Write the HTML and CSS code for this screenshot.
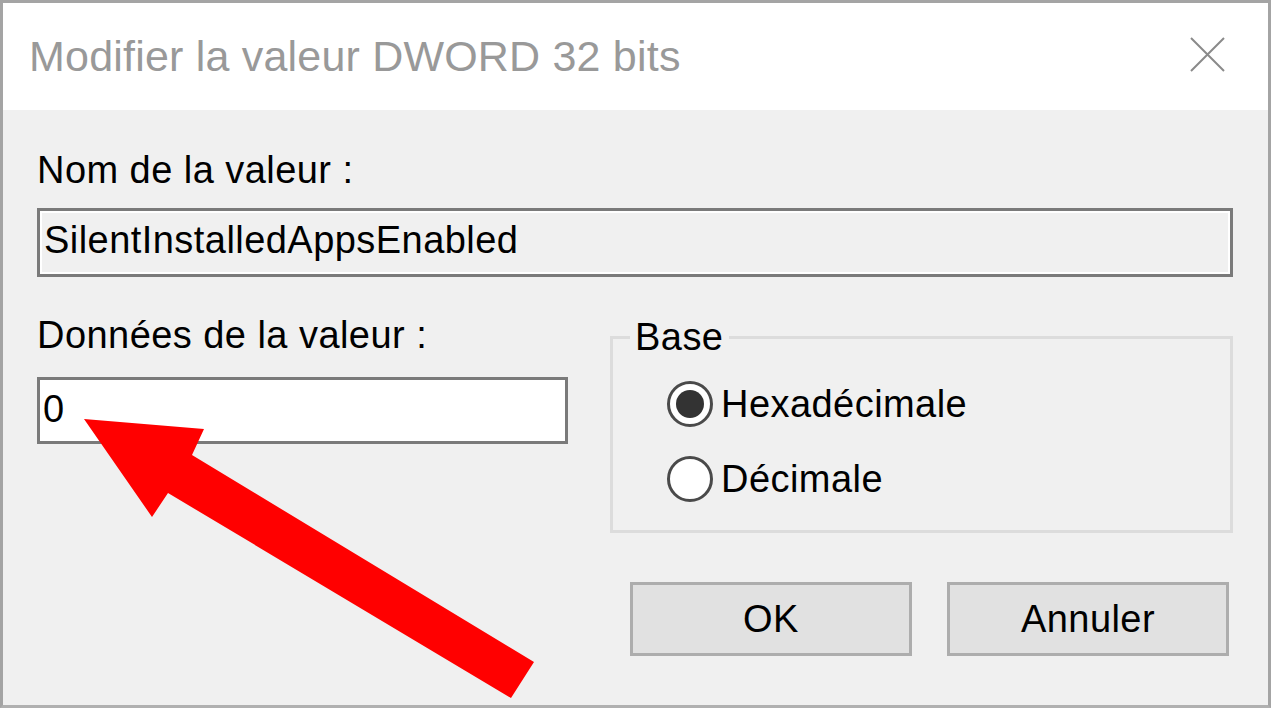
FILE: index.html
```html
<!DOCTYPE html>
<html lang="fr">
<head>
<meta charset="utf-8">
<title>Modifier la valeur DWORD 32 bits</title>
<link rel="stylesheet" href="styles.css">
</head>
<body>
<div class="window">
  <div class="titlebar">
    <span class="title">Modifier la valeur DWORD 32 bits</span>
    <svg class="close" width="35" height="35" viewBox="0 0 35 35">
      <path d="M1 1 L34 34 M34 1 L1 34" stroke="#8a8a8a" stroke-width="2" fill="none"/>
    </svg>
  </div>
  <div class="content">
    <div class="label">Nom de la valeur :</div>
    <div class="field readonly">SilentInstalledAppsEnabled</div>
    <div class="row">
      <div class="col-left">
        <div class="label">Données de la valeur :</div>
        <div class="field data">0</div>
      </div>
      <fieldset class="group">
        <legend class="group-title">Base</legend>
        <div class="group-body">
          <div class="radio-row"><span class="radio checked"></span><span class="radio-label">Hexadécimale</span></div>
          <div class="radio-row"><span class="radio"></span><span class="radio-label">Décimale</span></div>
        </div>
      </fieldset>
    </div>
    <div class="buttons">
      <div class="btn">OK</div>
      <div class="btn">Annuler</div>
    </div>
  </div>
</div>
<svg class="arrow" width="1271" height="708" viewBox="0 0 1271 708">
  <polygon points="84,419 204,429 192,455 534,662 511,698 168,493 152,517" fill="#ff0000"/>
</svg>
</body>
</html>
```

FILE: styles.css
```css
html, body {
  margin: 0;
  padding: 0;
}

body {
  width: 1271px;
  height: 708px;
  overflow: hidden;
  font-family: "Liberation Sans", Arial, sans-serif;
  background: #a8a8a8;
}

.window {
  box-sizing: border-box;
  width: 1271px;
  height: 708px;
  border: 3px solid #a4a4a4;
  border-bottom: 3px solid #b0b0b0;
  display: flex;
  flex-direction: column;
}

.titlebar {
  height: 107px;
  flex: none;
  background: #ffffff;
  display: flex;
  align-items: center;
  justify-content: space-between;
  padding-left: 26px;
}

.title {
  font-size: 43px;
  line-height: 43px;
  letter-spacing: 0.2px;
  color: #999999;
  white-space: nowrap;
}

.close {
  align-self: flex-start;
  margin-top: 34px;
  margin-right: 43px;
}

.content {
  flex: 1;
  background: #f0f0f0;
  padding: 38px 35px 0 34px;
  font-size: 38px;
  line-height: 44px;
  letter-spacing: 0.45px;
  color: #000000;
}

.label {
  height: 44px;
  white-space: nowrap;
}

.field {
  box-sizing: border-box;
  display: flex;
  align-items: center;
  border: 3px solid #7a7a7a;
  white-space: nowrap;
}

.readonly {
  margin-top: 16px;
  height: 69px;
  background: #f0f0f0;
  box-shadow: inset 0 0 0 2px #ffffff;
  padding: 0 4px 6px 4px;
}

.row {
  margin-top: 36px;
  display: flex;
  align-items: flex-start;
  gap: 42px;
}

.col-left {
  width: 531px;
  flex: none;
}

.data {
  margin-top: 20px;
  height: 67px;
  background: #ffffff;
  padding: 0 3px 4px 3px;
}

.group {
  box-sizing: border-box;
  width: 623px;
  flex: none;
  margin: 2px 0 0 0;
  padding: 0;
  min-width: 0;
  border: 3px solid #dcdcdc;
}

.group-title {
  margin-left: 17px;
  padding: 0 6px 0 5px;
  line-height: 44px;
}

.group-body {
  padding: 22px 0 28px 54px;
  display: flex;
  flex-direction: column;
  gap: 29px;
}

.radio-row {
  height: 46px;
  display: flex;
  align-items: center;
  gap: 8px;
}

.radio {
  box-sizing: border-box;
  width: 46px;
  height: 46px;
  flex: none;
  border: 3px solid #4a4a4a;
  border-radius: 50%;
  background: #ffffff;
  display: flex;
  align-items: center;
  justify-content: center;
}

.radio.checked::after {
  content: "";
  width: 28px;
  height: 28px;
  border-radius: 50%;
  background: #333333;
}

.radio-label {
  white-space: nowrap;
}

.buttons {
  margin-top: 49px;
  padding-right: 4px;
  display: flex;
  justify-content: flex-end;
  gap: 35px;
}

.btn {
  box-sizing: border-box;
  width: 282px;
  height: 74px;
  border: 3px solid #adadad;
  background: #e1e1e1;
  display: flex;
  align-items: center;
  justify-content: center;
}

.arrow {
  position: absolute;
  top: 0;
  left: 0;
  pointer-events: none;
}
```
